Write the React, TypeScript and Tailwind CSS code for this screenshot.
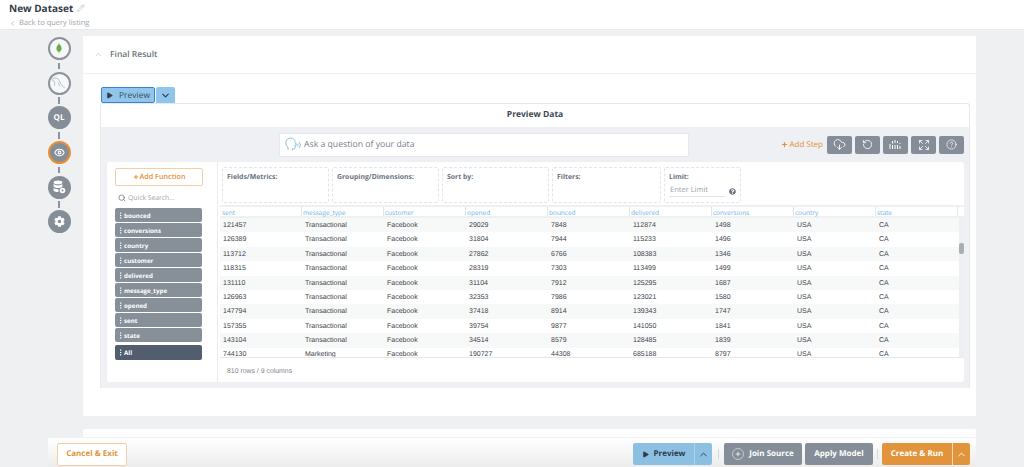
import React from 'react';
import { ChevronDown, ChevronLeft, ChevronUp, CircleHelp, CloudDownload, Expand, Eye, Pencil, Play, Plus, RotateCcw, Search } from 'lucide-react';
import { FaCog, FaQuestionCircle } from 'react-icons/fa';

const UI_FONT = "font-['Open_Sans',sans-serif]";

const columns = ['sent', 'message_type', 'customer', 'opened', 'bounced', 'delivered', 'conversions', 'country', 'state'];

const rows = [
  ['121457', 'Transactional', 'Facebook', '29029', '7848', '112874', '1498', 'USA', 'CA'],
  ['126389', 'Transactional', 'Facebook', '31804', '7944', '115233', '1496', 'USA', 'CA'],
  ['113712', 'Transactional', 'Facebook', '27862', '6766', '108383', '1346', 'USA', 'CA'],
  ['118315', 'Transactional', 'Facebook', '28319', '7303', '113499', '1499', 'USA', 'CA'],
  ['131110', 'Transactional', 'Facebook', '31104', '7912', '125295', '1687', 'USA', 'CA'],
  ['126963', 'Transactional', 'Facebook', '32353', '7986', '123021', '1580', 'USA', 'CA'],
  ['147794', 'Transactional', 'Facebook', '37418', '8914', '139343', '1747', 'USA', 'CA'],
  ['157355', 'Transactional', 'Facebook', '39754', '9877', '141050', '1841', 'USA', 'CA'],
  ['143104', 'Transactional', 'Facebook', '34514', '8579', '128485', '1839', 'USA', 'CA'],
  ['744130', 'Marketing', 'Facebook', '190727', '44308', '685188', '8797', 'USA', 'CA'],
];

const fieldChips = ['bounced', 'conversions', 'country', 'customer', 'delivered', 'message_type', 'opened', 'sent', 'state'];

const Connector = () => <div className="my-[2.5px] h-[6.7px] w-[1.5px] bg-[#8b939c]" />;

const GripDots = () => (
  <svg width="2" height="7" viewBox="0 0 2 7" className="mr-[2px] shrink-0" fill="currentColor">
    <rect x="0" y="0.5" width="1.3" height="1.2" />
    <rect x="0" y="2.900" width="1.3" height="1.2" />
    <rect x="0" y="5.300" width="1.3" height="1.2" />
  </svg>
);

const FieldChip = ({ label, dark = false }: { label: string; dark?: boolean }) => (
  <div
    className={`flex w-[87px] items-center rounded-[2px] pl-[5px] text-[6.2px] font-bold text-white ${
      dark ? 'h-[15px] bg-[#525d6d]' : 'h-[14px] bg-[#878f99]'
    }`}
  >
    <GripDots />
    <span className="pt-[1px]">{label}</span>
  </div>
);

const RailCircle = ({ children, active = false, outline = false }: { children: React.ReactNode; active?: boolean; outline?: boolean }) => (
  <div
    className={`flex h-[23px] w-[23px] items-center justify-center rounded-full ${
      outline ? 'border-2 border-[#8b939c] bg-[#f6f7f8]' : 'bg-[#858d97]'
    } ${active ? 'border-2 border-[#e58f38]' : ''}`}
  >
    {children}
  </div>
);

const DropBox = ({ label, width }: { label: string; width: string }) => (
  <div className={`h-[36px] ${width} rounded-[2px] border border-dashed border-[#e2e4e7] px-[4px] pt-[4px] text-[6.9px] font-bold leading-[11px] text-[#6a7480]`}>
    {label}
  </div>
);

const ToolButton = ({ children }: { children: React.ReactNode }) => (
  <div className="flex h-[18px] w-[25px] items-center justify-center rounded-[2px] bg-[#858e98] text-white">{children}</div>
);

const Equalizer = () => (
  <svg width="13" height="11" viewBox="0 0 13 11" stroke="currentColor" strokeWidth="1" fill="none">
    <path d="M1 5v5M3.5 6v4M3.5 2v2.500M6 1v3M6 6v4M8.5 2v2M8.5 6v4M11 4v1M11 7v3" />
  </svg>
);

const AskHead = () => (
  <svg width="16" height="15" viewBox="0 0 16 15" fill="none" stroke="#7fb9e0" strokeWidth="0.9">
    <path d="M3 13V10C1.4 9 0.8 7.6 0.8 6 0.8 3 3 1 5.6 1c2.6 0 4.4 1.8 4.6 4.4L11.4 8h-1.2v2.4c0 1-0.6 1.4-1.4 1.4H7.4V13.6" />
    <path d="M12 6.5l1.4 1.5-1.4 1.5M14 5l1.6 3L14 11" />
  </svg>
);

const Leaf = () => (
  <svg width="6" height="13" viewBox="0 0 8 14">
    <path d="M4 0C5 2 7.5 4 7.5 7 7.5 9.5 5.6 11 4.4 11.6L4.2 14H3.8L3.6 11.6C2.4 11 .5 9.5.5 7 .5 4 3 2 4 0Z" fill="#6cac48" />
  </svg>
);

const Dolphin = () => (
  <svg width="16" height="15" viewBox="0 0 16 15" fill="none" stroke="#98a0a8" strokeWidth="0.6">
    <path d="M1 3.5C3 1.500 5.500 1.500 7 3c1.600 1.700 2 4.200 3.200 5.600 1 1.200 2.600 2 3.600 3.600" />
    <path d="M1 3.500c.4 1.200 1.400 1.800 2.400 2.200.5 1.200.4 2.600 0 4" />
    <path d="M7.500 6.500c.2 1.500.6 2.700 1.300 3.700" />
  </svg>
);

const DbGear = () => (
  <svg width="13" height="14" viewBox="0 0 13 14" fill="white">
    <ellipse cx="5" cy="2.4" rx="4.4" ry="1.8" />
    <path d="M.6 4v2.200c0 1 2 1.800 4.400 1.800s4.400-.8 4.400-1.800V4c-.8.9-2.500 1.400-4.400 1.400S1.400 4.900.6 4Z" />
    <path d="M.6 8v2.200c0 1 2 1.800 4.400 1.800h.5V9.200H5C3.100 9.200 1.400 8.800.6 8Z" />
    <circle cx="9.500" cy="10.500" r="2.800" />
    <circle cx="9.500" cy="10.500" r="1" fill="#858d97" />
  </svg>
);

const Separator = ({ margin }: { margin: string }) => <div className={`${margin} h-[10px] w-px bg-[#d5d7da]`} />;

export default function App() {
  return (
    <div className={`relative h-[467px] w-[1024px] overflow-hidden bg-[#eff0f2] [text-rendering:geometricPrecision] ${UI_FONT}`}>
      <header className="h-[30px] border-b border-[#e8e9eb] bg-white pl-[9px] pt-[1px]">
        <div className="flex h-[13px] items-center text-[10px] font-bold leading-none text-[#333c48]">
          New Dataset
          <Pencil className="ml-[4px] text-[#b9bcc0]" size={8} />
        </div>
        <div className="mt-[4px] flex items-center text-[7.5px] leading-[10px] text-[#a0a4a9]">
          <ChevronLeft size={7} className="mr-[3px] text-[#8d9196]" />
          Back to query listing
        </div>
      </header>

      <div className="flex pt-[6px]">
        <nav className="flex w-[83px] shrink-0 flex-col items-center pl-[35px] pt-[1px]">
          <RailCircle outline>
            <Leaf />
          </RailCircle>
          <Connector />
          <RailCircle outline>
            <Dolphin />
          </RailCircle>
          <Connector />
          <RailCircle>
            <span className="text-[8px] font-bold text-white">QL</span>
          </RailCircle>
          <Connector />
          <RailCircle active>
            <Eye size={11} strokeWidth={2.4} className="text-white" />
          </RailCircle>
          <Connector />
          <RailCircle>
            <DbGear />
          </RailCircle>
          <Connector />
          <RailCircle>
            <FaCog size={11} className="text-white" />
          </RailCircle>
        </nav>

        <main className="w-[893px] shrink-0">
          <section className="h-[380px] bg-white">
            <div className="flex h-[38px] items-center border-b border-[#f0f1f2] pl-[11px] text-[8.5px] font-semibold text-[#6c737b]">
              <ChevronUp size={9} className="mr-[7px] text-[#c4c7ca]" />
              <span className="pt-[1px]">Final Result</span>
            </div>

            <div className="ml-[17px] mr-[6px] pt-[13px]">
              <div className="flex h-[16px] pl-[1px]">
                <div className="flex h-[16px] w-[54px] items-center rounded-[2px] border border-[#3f7fd9] bg-[#90c6ec] pl-[4px] text-[8.5px] text-[#3d4a57]">
                  <Play size={7} fill="#333c48" className="mr-[6px] text-[#333c48]" />
                  <span className="pt-[2px]">Preview</span>
                </div>
                <div className="ml-[1px] flex h-[16px] w-[19px] items-center justify-center rounded-t-[2px] bg-[#90c6ec]">
                  <ChevronDown size={11} strokeWidth={2.2} className="text-[#2c3640]" />
                </div>
              </div>

              <div className="h-[285px] rounded-t-[3px] border-l border-r border-t border-[#e6e8ea]">
                <div className="flex h-[23px] items-center justify-center pb-[1px] text-[8.5px] font-bold text-[#3c4652]">Preview Data</div>

                <div className="h-[261px] bg-[#eff0f3] pl-[6px] pr-[5px]">
                  <div className="flex h-[35px] items-center">
                    <div className="ml-[172px] flex h-[24px] w-[410px] items-center border border-[#e6e8ea] bg-white pl-[5px] text-[8.7px] text-[#7b8087]">
                      <AskHead />
                      <span className="ml-[3px]">Ask a question of your data</span>
                    </div>
                    <div className="ml-auto mr-[4px] flex items-center text-[8px] text-[#e58f38]">
                      <Plus size={7} strokeWidth={4} className="mr-[1px]" />
                      <span className="pt-[1px]">Add Step</span>
                    </div>
                    <div className="flex gap-[3px]">
                      <ToolButton>
                        <CloudDownload size={13} strokeWidth={1.6} />
                      </ToolButton>
                      <ToolButton>
                        <RotateCcw size={11} strokeWidth={1.8} />
                      </ToolButton>
                      <ToolButton>
                        <Equalizer />
                      </ToolButton>
                      <ToolButton>
                        <Expand size={12} strokeWidth={1.6} />
                      </ToolButton>
                      <ToolButton>
                        <CircleHelp size={11} strokeWidth={1.6} />
                      </ToolButton>
                    </div>
                  </div>

                  <div className="flex h-[220px] rounded-[3px] bg-white">
                    <aside className="w-[111px] shrink-0 border-r border-[#e9ebed] pl-[8px] pt-[6px]">
                      <div className="flex h-[18px] w-[88px] items-center justify-center rounded-[2px] border border-[#f4cfa6] text-[7.2px] font-semibold text-[#e58f38]">
                        <Plus size={6} strokeWidth={4} className="mr-[1px]" />
                        <span className="pt-[1px]">Add Function</span>
                      </div>
                      <div className="mt-[6px] flex h-[11px] items-center pl-[3px] text-[6.8px] text-[#a0a5ab]">
                        <Search size={8} className="mr-[2px] text-[#5e6670]" />
                        <span className="pt-[2px]">Quick Search...</span>
                      </div>
                      <div className="mt-[5px] flex flex-col gap-[1px]">
                        {fieldChips.map((chip) => (
                          <FieldChip key={chip} label={chip} />
                        ))}
                      </div>
                      <div className="mt-[3px]">
                        <FieldChip label="All" dark />
                      </div>
                    </aside>

                    <div className="flex min-w-0 flex-1 flex-col pl-[2px]">
                      <div className="flex h-[43px] pl-[2px] pt-[5px]">
                        <DropBox label="Fields/Metrics:" width="w-[107px] mr-[3px]" />
                        <DropBox label="Grouping/Dimensions:" width="w-[107px] mr-[3px]" />
                        <DropBox label="Sort by:" width="w-[107px] mr-[3px]" />
                        <DropBox label="Filters:" width="w-[109px] mr-[3px]" />
                        <div className="h-[36px] w-[77px] rounded-[2px] border border-dashed border-[#e2e4e7] px-[4px] pt-[4px]">
                          <div className="text-[6.9px] font-bold leading-[11px] text-[#6a7480]">Limit:</div>
                          <div className="mt-[2px] flex items-center">
                            <div className="w-[57px] border-b border-[#e3e5e8] pl-[1px] text-[7.5px] leading-[11px] text-[#9a9fa5]">Enter Limit</div>
                            <FaQuestionCircle size={7} className="ml-[4px] text-[#6a7480]" />
                          </div>
                        </div>
                      </div>

                      <div className="flex h-[13px] border-b-2 border-t-2 border-[#eff0f2]">
                        {columns.map((column) => (
                          <div key={column} className="w-[82px] shrink-0 border-r border-[#e4e6e8] pl-[1px] pt-[1px] text-[6.5px] leading-[9px] text-[#6cb2e6] first:pl-[2px]">
                            {column}
                          </div>
                        ))}
                      </div>

                      <div className="relative h-[140px] overflow-hidden border-b border-[#e5e7e9]">
                        {rows.map((row) => (
                          <div key={row[0]} className="flex h-[14.4px] items-center font-['Liberation_Sans',sans-serif] text-[7px] text-[#3e444b] odd:bg-[#f7f8f8]">
                            {row.map((cell, idx) => (
                              <div key={idx} className="w-[82px] shrink-0 pl-[3px] pt-[2px]">
                                {cell}
                              </div>
                            ))}
                          </div>
                        ))}
                        <div className="absolute right-0 top-0 h-full w-[5px] bg-[#eeeff0]">
                          <div className="mt-[25px] h-[11px] w-[5px] rounded-[2px] bg-[#a9adb1]" />
                        </div>
                      </div>

                      <div className="pl-[7px] pt-[9px] font-['Liberation_Sans',sans-serif] text-[6.9px] text-[#7f858c]">810 rows / 9 columns</div>
                    </div>
                  </div>
                </div>
              </div>
            </div>
          </section>
          <section className="mt-[13px] h-[40px] rounded-t-[2px] bg-white" />
        </main>
      </div>

      <footer className="absolute bottom-0 left-[48px] flex h-[30px] w-[928px] items-center border-t border-[#f0f1f2] bg-gradient-to-b from-white to-[#ececec] pl-[9px] pr-[6px] pt-[3px] text-[8px] font-bold">
        <div className="flex h-[23px] w-[70px] items-center justify-center rounded-[2px] border border-[#f4cfa6] bg-white text-[#e2943d]">Cancel &amp; Exit</div>
        <div className="ml-auto flex h-[22px] w-[79px] rounded-[2px] bg-[#8bc0e3] text-[#2f3a46]">
          <div className="flex flex-1 items-center justify-center border-r border-[#a9d2ec]">
            <Play size={7} fill="#2f3a46" className="mr-[5px]" />
            Preview
          </div>
          <div className="flex w-[17px] items-center justify-center">
            <ChevronUp size={11} strokeWidth={2} />
          </div>
        </div>
        <Separator margin="ml-[6px] mr-[5px]" />
        <div className="flex h-[22px] w-[78px] items-center justify-center rounded-[2px] bg-[#858e98] text-white">
          <span className="mr-[5px] flex h-[12px] w-[12px] items-center justify-center rounded-full border border-[#c3c7cc]">
            <Plus size={6} strokeWidth={3} />
          </span>
          Join Source
        </div>
        <div className="ml-[3px] flex h-[22px] w-[68px] items-center justify-center rounded-[2px] bg-[#858e98] text-white">Apply Model</div>
        <Separator margin="mx-[4px]" />
        <div className="flex h-[22px] w-[88px] rounded-[2px] bg-[#e2943d] text-white">
          <div className="flex flex-1 items-center justify-center border-r border-[#f6d9b6]">Create &amp; Run</div>
          <div className="flex w-[17px] items-center justify-center">
            <ChevronUp size={11} strokeWidth={2} />
          </div>
        </div>
      </footer>
    </div>
  );
}
